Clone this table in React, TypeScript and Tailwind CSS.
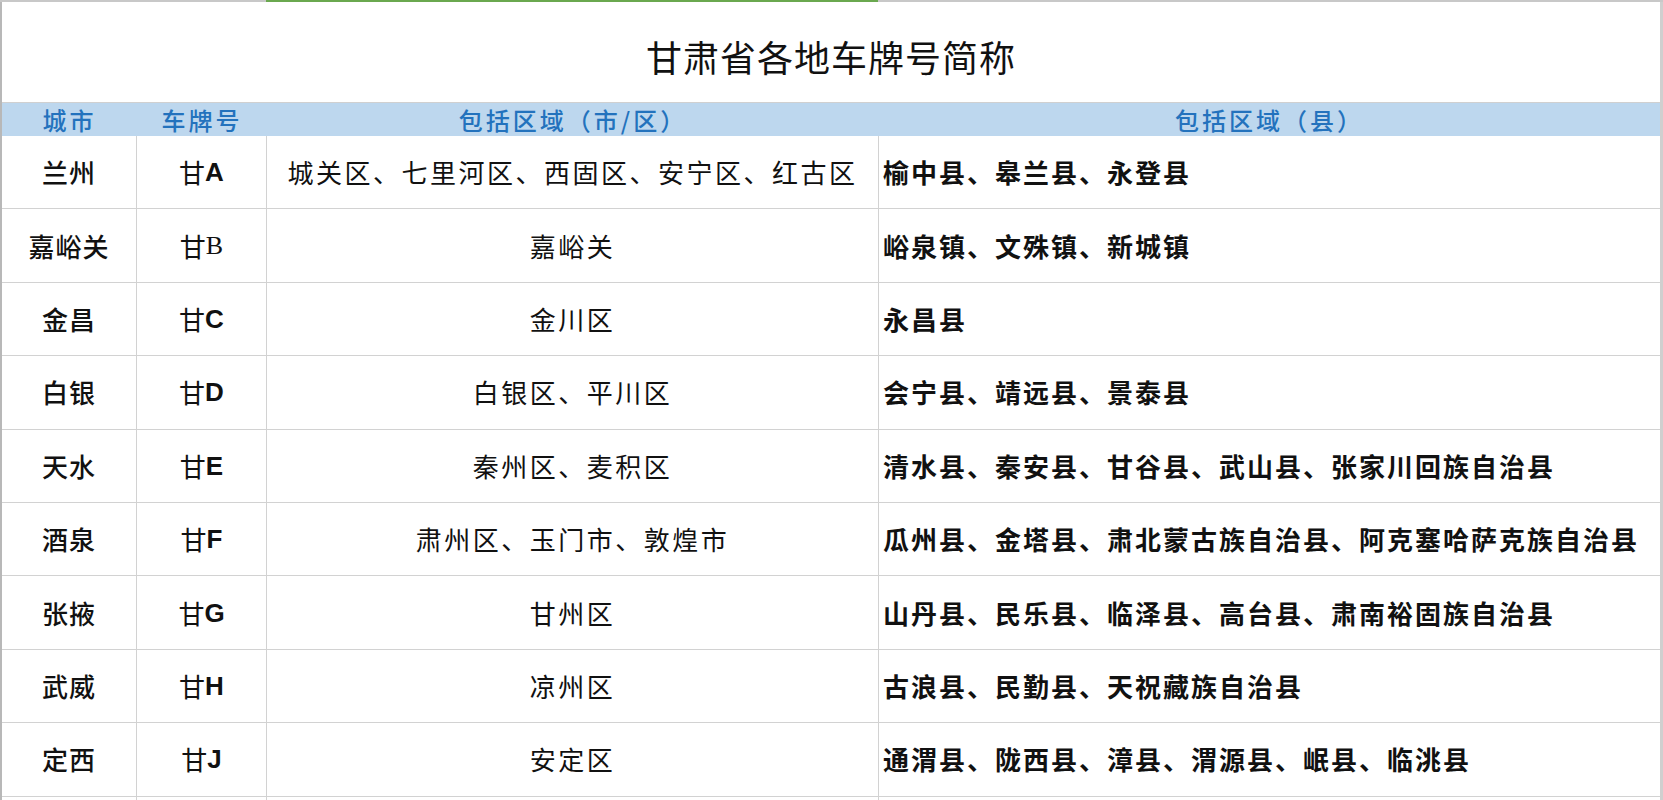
import React from "react";

type Row = {
  city: string;
  letter: string;
  serifLetter?: boolean;
  urban: string;
  county: string;
};

const rows: Row[] = [
  { city: "兰州", letter: "A", urban: "城关区、七里河区、西固区、安宁区、红古区", county: "榆中县、皋兰县、永登县" },
  { city: "嘉峪关", letter: "B", serifLetter: true, urban: "嘉峪关", county: "峪泉镇、文殊镇、新城镇" },
  { city: "金昌", letter: "C", urban: "金川区", county: "永昌县" },
  { city: "白银", letter: "D", urban: "白银区、平川区", county: "会宁县、靖远县、景泰县" },
  { city: "天水", letter: "E", urban: "秦州区、麦积区", county: "清水县、秦安县、甘谷县、武山县、张家川回族自治县" },
  { city: "酒泉", letter: "F", urban: "肃州区、玉门市、敦煌市", county: "瓜州县、金塔县、肃北蒙古族自治县、阿克塞哈萨克族自治县" },
  { city: "张掖", letter: "G", urban: "甘州区", county: "山丹县、民乐县、临泽县、高台县、肃南裕固族自治县" },
  { city: "武威", letter: "H", urban: "凉州区", county: "古浪县、民勤县、天祝藏族自治县" },
  { city: "定西", letter: "J", urban: "安定区", county: "通渭县、陇西县、漳县、渭源县、岷县、临洮县" },
];

const cjk = "font-['Noto_Sans_CJK_SC','Noto_Sans',sans-serif]";

const PlateTable: React.FC = () => {
  return (
    <div className={`w-[1663px] h-[800px] overflow-hidden bg-white ${cjk} text-[#111]`}>
      {/* top edge: grey line with the green column marker */}
      <div className="flex h-[2px]">
        <div className="w-[266px] bg-[#c8c8c8]"></div>
        <div className="w-[612px] bg-[#6aa84f]"></div>
        <div className="flex-1 bg-[#c8c8c8]"></div>
      </div>

      <div className="border-l-2 border-r-[3px] border-[#cfcfcf] border-l-[#b8b8b8]">
        <div className="h-[100px] flex items-center justify-center pt-2">
          <h1 className="text-[36px] tracking-[1px] leading-none">甘肃省各地车牌号简称</h1>
        </div>

        <div className="h-[34px] flex bg-[#bdd7ee] border-t border-[#d0d0d0] text-[#2372bd] text-[24px] tracking-[3px] font-medium leading-none">
          <div className="w-[135px] flex items-center justify-center">城市</div>
          <div className="w-[130px] flex items-center justify-center">车牌号</div>
          <div className="w-[612px] flex items-center justify-center">包括区域（市/区）</div>
          <div className="flex-1 flex items-center justify-center">包括区域（县）</div>
        </div>

        {rows.map((r) => (
          <div key={r.letter} className="h-[73.4px] flex border-b border-[#d2d2d2] text-[26px] leading-none">
            <div className="w-[135px] border-r border-[#d2d2d2] flex items-center justify-center font-medium tracking-[1px]">
              {r.city}
            </div>
            <div className="w-[130px] border-r border-[#d2d2d2] flex items-center justify-center">
              <span>甘</span>
              {r.serifLetter ? (
                <span className="font-['Liberation_Serif',serif]">{r.letter}</span>
              ) : (
                <span className="font-['Liberation_Sans',sans-serif] font-bold">{r.letter}</span>
              )}
            </div>
            <div className="w-[612px] border-r border-[#d2d2d2] flex items-center justify-center tracking-[2.5px]">
              {r.urban}
            </div>
            <div className="flex-1 flex items-center pl-[4px] font-semibold tracking-[2px] whitespace-nowrap">
              {r.county}
            </div>
          </div>
        ))}

        <div className="h-[40px] flex">
          <div className="w-[135px] border-r border-[#d2d2d2]"></div>
          <div className="w-[130px] border-r border-[#d2d2d2]"></div>
          <div className="w-[612px] border-r border-[#d2d2d2]"></div>
          <div className="flex-1"></div>
        </div>
      </div>
    </div>
  );
};

export default function App() {
  return <PlateTable />;
}
